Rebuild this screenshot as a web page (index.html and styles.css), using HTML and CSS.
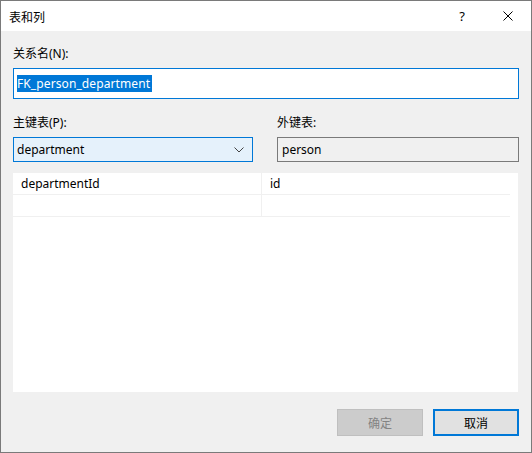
FILE: index.html
```html
<!DOCTYPE html>
<html lang="zh-CN">
<head>
    <meta charset="UTF-8">
    <title>表和列</title>
    <link rel="stylesheet" href="styles.css">
</head>
<body>
    <div class="dialog">
        <div class="titlebar">
            <span class="title">表和列</span>
            <span class="caption-btn">?</span>
            <span class="caption-btn">
                <svg width="10" height="10" viewBox="0 0 10 10"><path d="M0.5 0.5 L9.5 9.5 M9.5 0.5 L0.5 9.5" stroke="#000" stroke-width="1" fill="none"/></svg>
            </span>
        </div>

        <div class="content">
            <div class="label first">关系名(N):</div>
            <div class="textbox focused"><span class="selected">FK_person_department</span></div>

            <div class="pair">
                <div class="col left">
                    <div class="label">主键表(P):</div>
                    <div class="combo">
                        <span>department</span>
                        <svg width="10" height="6" viewBox="0 0 10 6"><path d="M0.5 0.5 L5 5 L9.5 0.5" stroke="#444" stroke-width="1" fill="none"/></svg>
                    </div>
                </div>
                <div class="col right">
                    <div class="label">外键表:</div>
                    <div class="textbox readonly">person</div>
                </div>
            </div>

            <div class="grid">
                <div class="row">
                    <div class="cell">departmentId</div>
                    <div class="cell">id</div>
                </div>
                <div class="row">
                    <div class="cell"></div>
                    <div class="cell"></div>
                </div>
            </div>

            <div class="buttons">
                <button class="btn disabled">确定</button>
                <button class="btn default">取消</button>
            </div>
        </div>
    </div>
</body>
</html>
```

FILE: styles.css
```css
body {
    margin: 0;
    font-family: "Noto Sans", "Noto Sans CJK SC", sans-serif;
    font-size: 12px;
    color: #000;
}
.dialog {
    width: 532px;
    height: 453px;
    box-sizing: border-box;
    border: 1px solid #7a7a7a;
    background-color: #f0f0f0;
    display: flex;
    flex-direction: column;
}
.titlebar {
    height: 30px;
    background-color: #fff;
    display: flex;
    align-items: center;
    padding-left: 8px;
}
.title {
    flex-grow: 1;
    font-family: "Noto Sans CJK SC", sans-serif;
}
.caption-btn {
    width: 46px;
    height: 30px;
    display: flex;
    align-items: center;
    justify-content: center;
    font-size: 13px;
}
.content {
    padding: 0 12px;
    display: flex;
    flex-direction: column;
}
.label {
    line-height: 16px;
    height: 16px;
    margin-bottom: 6px;
}
.label.first {
    margin-top: 15px;
}
.textbox {
    box-sizing: border-box;
    border: 1px solid #7a7a7a;
    background-color: #fff;
    display: flex;
    align-items: center;
}
.textbox.focused {
    height: 31px;
    border-color: #0078d7;
    padding-left: 3px;
}
.selected {
    background-color: #0078d7;
    color: #fff;
    line-height: 17px;
    padding-right: 2px;
    letter-spacing: 0.1px;
}
.pair {
    display: flex;
    gap: 24px;
    margin-top: 16px;
}
.col.left {
    width: 240px;
}
.col.right {
    flex-grow: 1;
}
.combo {
    height: 25px;
    box-sizing: border-box;
    border: 1px solid #0078d7;
    background-color: #e5f1fb;
    display: flex;
    align-items: center;
    justify-content: space-between;
    padding: 0 8px 0 3px;
}
.textbox.readonly {
    height: 25px;
    background-color: #f0f0f0;
    padding-left: 4px;
}
.grid {
    margin-top: 11px;
    height: 219px;
    width: 505px;
    background-color: #fff;
}
.row {
    display: flex;
    width: 497px;
    height: 22px;
    border-bottom: 1px solid #f0f0f0;
    box-sizing: border-box;
}
.cell {
    display: flex;
    align-items: center;
    padding-left: 8px;
}
.cell:first-child {
    width: 249px;
    box-sizing: border-box;
    border-right: 1px solid #f0f0f0;
}
.buttons {
    display: flex;
    justify-content: flex-end;
    gap: 10px;
    margin-top: 17px;
}
.btn {
    width: 86px;
    height: 27px;
    box-sizing: border-box;
    font-family: "Noto Sans CJK SC", sans-serif;
    font-size: 12px;
    background-color: #e1e1e1;
    border: 1px solid #adadad;
    color: #000;
    padding: 0;
}
.btn.disabled {
    background-color: #cccccc;
    border-color: #bfbfbf;
    color: #838383;
}
.btn.default {
    border: 2px solid #0078d7;
}
```
